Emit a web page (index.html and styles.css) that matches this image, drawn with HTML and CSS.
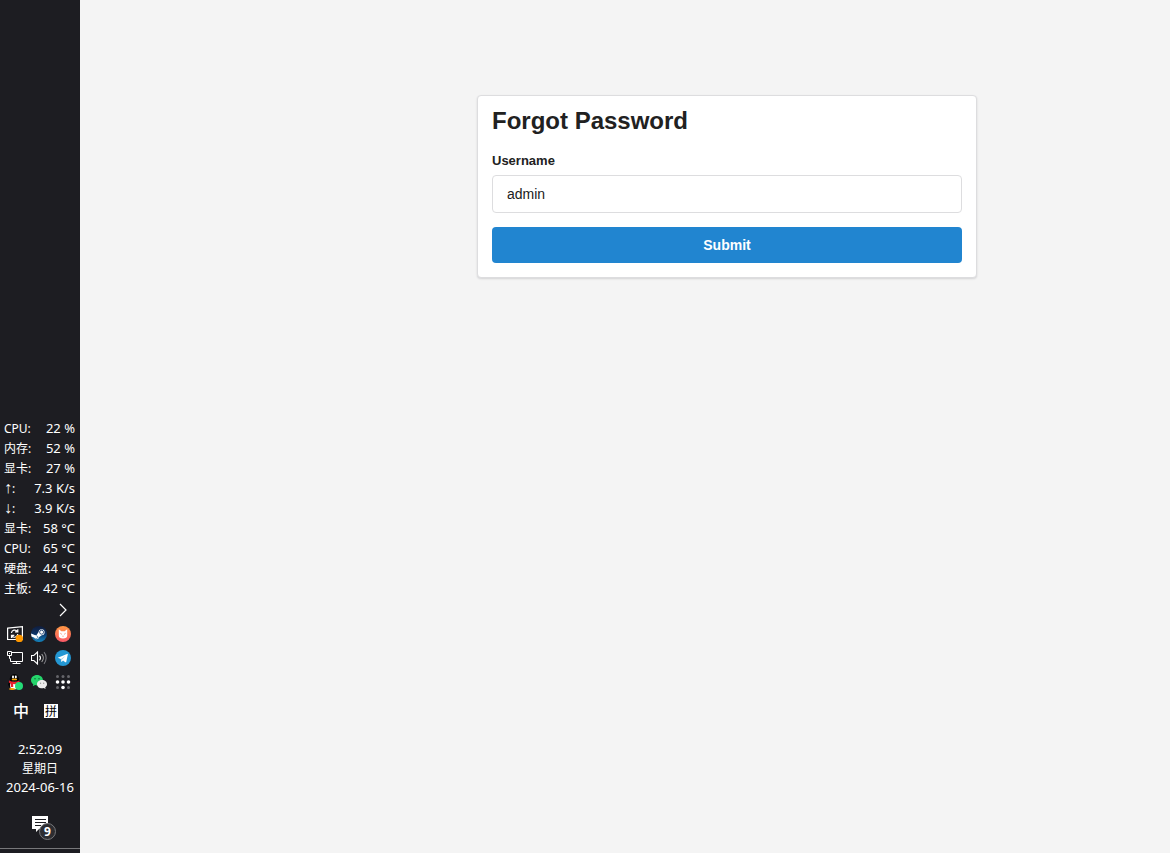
FILE: index.html
```html
<!DOCTYPE html>
<html lang="en">
<head>
    <meta charset="UTF-8">
    <meta name="viewport" content="width=device-width, initial-scale=1.0">
    <title>Forgot Password</title>
    <link rel="stylesheet" href="styles.css">
</head>

<body>
    <!-- Taskbar -->
    <aside class="taskbar" lang="zh-CN">
        <table class="monitor">
            <tr><th scope="row">CPU:</th><td>22 %</td></tr>
            <tr><th scope="row">内存:</th><td>52 %</td></tr>
            <tr><th scope="row">显卡:</th><td>27 %</td></tr>
            <tr><th scope="row"><span class="arrow">↑</span>:</th><td>7.3 K/s</td></tr>
            <tr><th scope="row"><span class="arrow">↓</span>:</th><td>3.9 K/s</td></tr>
            <tr><th scope="row">显卡:</th><td>58 °C</td></tr>
            <tr><th scope="row">CPU:</th><td>65 °C</td></tr>
            <tr><th scope="row">硬盘:</th><td>44 °C</td></tr>
            <tr><th scope="row">主板:</th><td>42 °C</td></tr>
        </table>

        <div class="tray">
            <button type="button" class="tray-btn tray-more" aria-label="Hidden icons">
                <svg width="16" height="16" viewBox="0 0 16 16" fill="none" stroke="#fff" stroke-width="1.2"><path d="M5 2l6 6-6 6"/></svg>
            </button>
            <button type="button" class="tray-btn" aria-label="Windows Update">
                <svg width="16" height="16" viewBox="0 0 16 16" fill="none" stroke="#fff" stroke-width="1.2">
                    <path d="M.6 2.2L15.4.7v12.6L.6 13.5z"/>
                    <path d="M4.4 7a3.4 3.4 0 0 1 6-1.7M10.8 3.2v2.6H8M10.8 8a3.4 3.4 0 0 1-6 2M4.5 12V9.4h2.8"/>
                    <circle cx="12.3" cy="12.4" r="3.7" fill="#ff9800" stroke="none"/>
                </svg>
            </button>
            <button type="button" class="tray-btn" aria-label="Steam">
                <svg width="16" height="16" viewBox="0 0 16 16">
                    <defs><linearGradient id="steam" x1="0" y1="0" x2="0" y2="1"><stop offset="0" stop-color="#101c3c"/><stop offset=".5" stop-color="#0b3467"/><stop offset="1" stop-color="#1587c2"/></linearGradient></defs>
                    <circle cx="8" cy="8" r="8" fill="url(#steam)"/>
                    <path d="M0 7.4l4.3 1.8a2.3 2.3 0 0 1 1.3-.3l2-2.8a3 3 0 1 1 3.1 3.1l-2.8 2a2.3 2.3 0 0 1-4.5.5L.5 10.5z" fill="#fff"/>
                    <circle cx="10.6" cy="6.2" r="2" fill="#fff" stroke="#0b3467" stroke-width=".8"/>
                    <path d="M4.3 12.3a1.5 1.5 0 1 0 1-2.6" fill="none" stroke="#0f5b97" stroke-width=".7"/>
                </svg>
            </button>
            <button type="button" class="tray-btn" aria-label="Clash">
                <svg width="16" height="16" viewBox="0 0 16 16">
                    <defs><linearGradient id="cat" x1="0" y1="0" x2="0" y2="1"><stop offset="0" stop-color="#ff9843"/><stop offset="1" stop-color="#fb5968"/></linearGradient></defs>
                    <circle cx="8" cy="8" r="8" fill="url(#cat)"/>
                    <path d="M3.8 3.3L6.4 5.3h3.2l2.6-2v6.5c0 1.8-1.6 2.8-4.2 2.8s-4.2-1-4.2-2.8z" fill="#fff"/>
                    <path d="M5.4 7.3l1.4 1M10.6 7.3l-1.4 1M7.4 10.2h1.2" stroke="#fb7658" stroke-width=".8"/>
                </svg>
            </button>
            <button type="button" class="tray-btn" aria-label="Network">
                <svg width="16" height="16" viewBox="0 0 16 16" fill="none" stroke="#fff">
                    <path d="M4.5 2.5h11v9h-12V8.5M9.5 11.5v2M5.500 13.5h8"/>
                    <path d="M.5 1.5h4v4h-4zM2.5 5.5v3h1M2 3.5h1"/>
                </svg>
            </button>
            <button type="button" class="tray-btn" aria-label="Volume">
                <svg width="16" height="16" viewBox="0 0 16 16" fill="none" stroke="#fff" stroke-width="1.1">
                    <path d="M.5 5.5h2.3L6.5 2v12L2.8 10.5H.5z"/>
                    <path d="M8.5 5.7a3.5 3.5 0 0 1 0 4.6"/>
                    <path d="M10.7 4a6 6 0 0 1 0 8" stroke="#aaa"/>
                    <path d="M13 2.2a9 9 0 0 1 0 11.6" stroke="#77777c"/>
                </svg>
            </button>
            <button type="button" class="tray-btn" aria-label="Telegram">
                <svg width="16" height="16" viewBox="0 0 16 16">
                    <circle cx="8" cy="8" r="8" fill="#2497d3"/>
                    <path d="M2.7 7.8l9.4-3.9c.5-.2.8.1.7.7l-1.5 7.2c-.1.6-.5.7-1 .4L8 10.5l-1.2 1.2c-.3.3-.6.2-.6-.2L5.8 9z" fill="#fff"/>
                    <path d="M6 9l4.6-3.3-3.8 4-.3 1.7z" fill="#a9cfe5"/>
                </svg>
            </button>
            <button type="button" class="tray-btn" aria-label="QQ">
                <svg width="16" height="16" viewBox="0 0 16 16">
                    <ellipse cx="7.2" cy="10.2" rx="6" ry="4.8" fill="#050505"/>
                    <ellipse cx="7.2" cy="11.4" rx="4.2" ry="3.9" fill="#fff"/>
                    <path d="M2.8 5.8C2.8 2.3 4.6 0 7.4 0S12 2.3 12 5.8c0 2.5-9.2 2.5-9.2 0z" fill="#050505"/>
                    <ellipse cx="6" cy="3" rx="1" ry="1.4" fill="#fff"/>
                    <ellipse cx="8.8" cy="3" rx="1" ry="1.4" fill="#fff"/>
                    <ellipse cx="7.4" cy="5.4" rx="2.8" ry=".9" fill="#f6a400"/>
                    <path d="M2.2 6.6c3 1.7 7 1.7 10 0l.6 2.2c-2.3 1.2-4.7 1.5-6.6 1.3v3H3.8V9.5l-2-.9z" fill="#e8202c"/>
                    <ellipse cx="5" cy="15" rx="3" ry="1" fill="#f6a400"/>
                    <circle cx="12" cy="12" r="4" fill="#24dc78"/>
                </svg>
            </button>
            <button type="button" class="tray-btn" aria-label="WeChat">
                <svg width="16" height="16" viewBox="0 0 16 16">
                    <path d="M6 1c3.4 0 6 2.3 6 5.2s-2.6 5.2-6 5.2c-.7 0-1.3-.1-1.9-.3L1.8 12.3l.5-2.1C.9 9.2 0 7.8 0 6.2 0 3.3 2.6 1 6 1z" fill="#25d46b"/>
                    <circle cx="4" cy="4.7" r=".8" fill="#12703a"/><circle cx="8" cy="4.7" r=".8" fill="#12703a"/>
                    <path d="M11 6c2.9 0 5 1.9 5 4.2 0 1.3-.7 2.5-1.8 3.2l.4 1.6-1.9-.9c-.5.2-1.1.2-1.7.2-2.8 0-5-1.8-5-4.1S8.2 6 11 6z" fill="#ececec"/>
                    <circle cx="9.5" cy="9.2" r=".7" fill="#999"/><circle cx="12.7" cy="9.2" r=".7" fill="#999"/>
                </svg>
            </button>
            <button type="button" class="tray-btn" aria-label="Input panel">
                <svg width="16" height="16" viewBox="0 0 16 16" fill="#fff">
                    <g fill="#65656a"><circle cx="2.5" cy="2.5" r="1.5"/><circle cx="8" cy="2.5" r="1.5"/><circle cx="13.5" cy="2.5" r="1.5"/><circle cx="2.5" cy="13.5" r="1.5"/><circle cx="13.5" cy="13.5" r="1.5"/></g>
                    <circle cx="2.5" cy="8" r="1.8"/><circle cx="8" cy="8" r="1.8"/><circle cx="13.5" cy="8" r="1.8"/><circle cx="8" cy="13.5" r="1.8"/>
                </svg>
            </button>
        </div>

        <div class="ime">
            <button type="button" class="ime-lang">中</button>
            <button type="button" class="ime-mode">拼</button>
        </div>

        <div class="clock">
            <time>2:52:09</time>
            <span class="clock-day">星期日</span>
            <time>2024-06-16</time>
        </div>

        <button type="button" class="notify" aria-label="Notifications">
            <svg width="16" height="16" viewBox="0 0 16 16"><path d="M0 0h16v13H7l-3 3v-3H0z" fill="#fff"/><path d="M3 3.5h11M3 6.5h11M3 9.5h6" stroke="#1d1d22"/></svg>
            <span class="notify-badge">9</span>
        </button>
    </aside>

    <!-- Page -->
    <main class="page">
        <form class="card">
            <h2 class="card-title">Forgot Password</h2>
            <label class="field-label" for="username">Username</label>
            <input class="field-input" type="text" id="username" name="username" value="admin">
            <button class="submit-btn" type="submit">Submit</button>
        </form>
    </main>
</body>
</html>
```

FILE: styles.css
```css
* {
    box-sizing: border-box;
}

body {
    display: flex;
    min-height: 100vh;
    margin: 0;
    background-color: #f4f4f4;
    color: #212121;
    font-family: "Liberation Sans", Arial, sans-serif;
    font-size: 14px;
}

button {
    padding: 0;
    border: 0;
    background: none;
    color: inherit;
    font-family: inherit;
    cursor: pointer;
}

svg {
    display: block;
}

/* Taskbar */
.taskbar {
    display: flex;
    flex-direction: column;
    justify-content: flex-end;
    flex: none;
    width: 80px;
    padding-bottom: 4px;
    background-color: #1d1d22;
    color: #fff;
    font-family: "Noto Sans", "Noto Sans CJK SC", sans-serif;
    font-size: 12px;
}

.monitor {
    width: 100%;
    padding: 0 5px 0 4px;
    border-spacing: 0;
    white-space: nowrap;
}

.monitor th,
.monitor td {
    height: 20px;
    padding: 0;
}

.monitor th {
    padding-top: 2px;
    font-weight: normal;
    line-height: 18px;
    text-align: left;
}

.monitor td {
    font-size: 13px;
    line-height: 20px;
    text-align: right;
}

.arrow {
    font-family: "Liberation Sans", Arial, sans-serif;
    font-size: 16px;
    line-height: 12px;
}

.tray {
    display: grid;
    grid-template-columns: repeat(3, 24px);
    grid-auto-rows: 24px;
    padding-left: 3px;
}

.tray-btn {
    display: flex;
    align-items: center;
    justify-content: center;
}

.tray-more {
    grid-column: 3;
}

.ime {
    display: flex;
    align-items: center;
    gap: 15px;
    height: 34px;
    padding-left: 13px;
}

.ime-lang {
    width: 16px;
    font-size: 16px;
    font-weight: 500;
    line-height: 16px;
}

.ime-mode {
    width: 14px;
    height: 14px;
    padding-top: 2px;
    background-color: #fff;
    color: #000;
    font-size: 12px;
    line-height: 12px;
}

.clock {
    display: flex;
    flex-direction: column;
    align-items: center;
    padding: 12px 0 18px;
    font-size: 13px;
    line-height: 19px;
}

.clock-day {
    font-size: 12px;
}

.notify {
    position: relative;
    display: flex;
    justify-content: center;
    width: 100%;
    height: 34px;
    padding-top: 1px;
    border-bottom: 1px solid #77777a;
}

.notify-badge {
    position: absolute;
    top: 8px;
    left: 39px;
    width: 17px;
    height: 17px;
    border: 1px solid #77777a;
    border-radius: 50%;
    background-color: #2d2d31;
    font-size: 12px;
    font-weight: bold;
    line-height: 15px;
    text-align: center;
}

/* Page */
.page {
    display: flex;
    flex: 1;
    align-items: flex-start;
    justify-content: center;
    padding: 95px 0 0 204px;
}

.card {
    display: flex;
    flex-direction: column;
    width: 100%;
    max-width: 500px;
    padding: 10px 14px 14px;
    border: 1px solid #dddddf;
    border-radius: 4px;
    background-color: #fff;
    box-shadow: 0 1px 2px rgba(34, 36, 38, .15);
}

.card-title {
    margin: 0 0 15px;
    font-size: 24px;
    line-height: 30px;
}

.field-label {
    margin-bottom: 5px;
    font-size: 13px;
    font-weight: bold;
    line-height: 19px;
}

.field-input {
    height: 38px;
    margin-bottom: 14px;
    padding: 0 14px;
    border: 1px solid #dddddf;
    border-radius: 4px;
    background-color: #fff;
    color: #212121;
    font-family: inherit;
    font-size: 14px;
}

.field-input:focus {
    border-color: #85b7d9;
    outline: none;
}

.submit-btn {
    height: 36px;
    border-radius: 4px;
    background-color: #2185d0;
    color: #fff;
    font-size: 14px;
    font-weight: bold;
}

.submit-btn:hover {
    background-color: #1678c2;
}
```
